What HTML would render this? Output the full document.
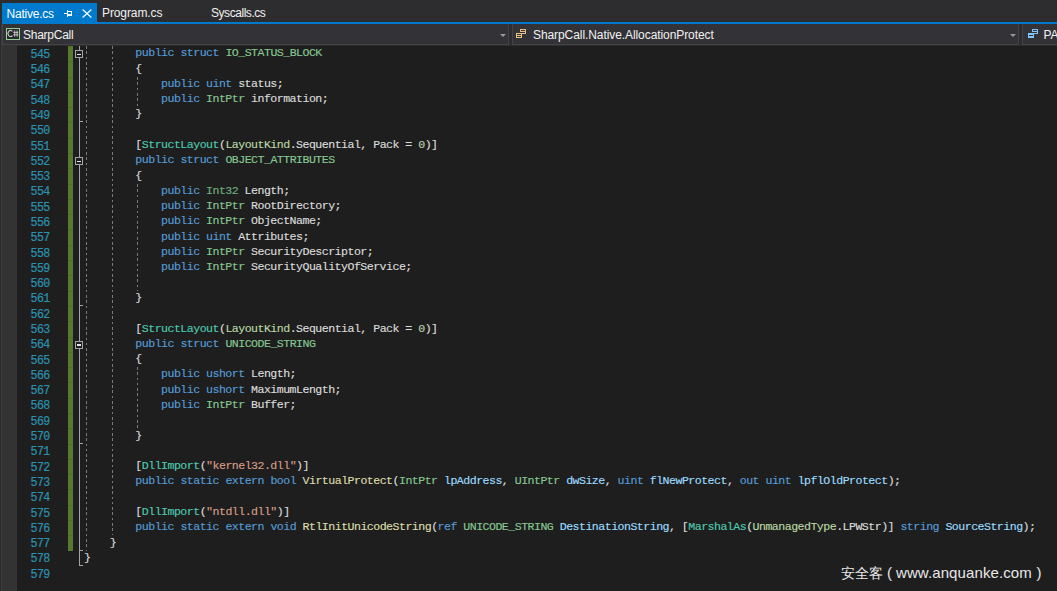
<!DOCTYPE html>
<html><head><meta charset="utf-8">
<style>
*{margin:0;padding:0;box-sizing:border-box}
html,body{width:1057px;height:591px;overflow:hidden;background:#2d2d30}
body{position:relative;font-family:"Liberation Sans",sans-serif;font-size:12px;color:#f1f1f1}
.tabbar{position:absolute;left:0;top:0;width:1057px;height:24px;background:#2d2d30}
.tab{position:absolute;top:3px;height:19px;white-space:nowrap;line-height:19px}
.tab.active{left:2px;width:95px;background:#007acc;color:#fff}
.blueline{position:absolute;left:2px;top:22px;width:1055px;height:2px;background:#007acc}
.nav{position:absolute;top:24px;left:0;width:1057px;height:22px;background:#2d2d30}
.combo{position:absolute;top:0;height:21px;background:#333337;border:1px solid #434346;border-top:none}
.arrow{position:absolute;width:0;height:0;border-left:3px solid transparent;border-right:3px solid transparent;border-top:3px solid #999}
.editor{position:absolute;left:0;top:46px;width:1057px;height:545px;background:#1e1e1e}
.margin{position:absolute;left:2px;top:45px;width:15px;height:546px;background:#333333}
.leftedge{position:absolute;left:0;top:24px;width:2px;height:567px;background:#2a2a2c;border-right:1px solid #3c3c40}
.ln{position:absolute;left:18px;width:31.8px;text-align:right;font-family:"Liberation Mono",monospace;font-size:11.6px;letter-spacing:-0.53px;-webkit-text-stroke:0.2px;color:#2b91af;line-height:15.29px;height:15.29px;transform:scaleY(1.05);transform-origin:0 70%}
.cl{position:absolute;white-space:pre;font-family:"Liberation Mono",monospace;font-size:11.6px;letter-spacing:-0.53px;-webkit-text-stroke:0.15px;color:#dcdcdc;line-height:15.29px;height:15.29px;transform:scaleY(1.0);transform-origin:0 70%}
.i{color:#6fae80} .k{color:#569cd6} .c{color:#4ec9b0} .s{color:#86c691} .e{color:#b8d7a3} .n{color:#b5cea8} .q{color:#d69d85} .m{color:#dcdcaa} .a{color:#9cdcfe}
.green{position:absolute;left:68px;top:46px;width:5px;height:504.57px;background:repeating-linear-gradient(#4f6e2b 0,#4f6e2b 1px,#587a30 1px,#587a30 15.29px)}
.ov{position:absolute;left:79px;width:1px;background:#a5a5a5}
.ot{position:absolute;left:79px;width:4px;height:1px;background:#a5a5a5}
.ob{position:absolute;left:75px;width:8px;height:8px;border:1px solid #a5a5a5;background:#1e1e1e}
.om{position:absolute;left:1px;top:2.5px;width:4px;height:1.5px;background:#e8e8e8}
.ig{position:absolute;width:1px;background:repeating-linear-gradient(#7a7a7a 0,#7a7a7a 2.6px,transparent 2.6px,transparent 5.3px)}
.wm{position:absolute;top:564px;font-size:15px;line-height:17px;color:#e8e8e8;white-space:nowrap}
</style></head><body>
<div class="tabbar">
  <div class="tab active"><span style="position:absolute;left:4.5px;top:2px;letter-spacing:-0.22px">Native.cs</span>
    <svg style="position:absolute;left:61px;top:6px" width="10" height="9" viewBox="0 0 10 9" shape-rendering="crispEdges"><g fill="#f4f8fc"><rect x="1" y="4" width="3" height="1"/><rect x="4" y="1" width="1" height="7"/><rect x="5" y="2" width="4" height="1"/><rect x="8" y="2" width="1" height="5"/><rect x="5" y="5" width="4" height="2"/></g></svg>
    <svg style="position:absolute;left:80px;top:6px" width="10" height="9" viewBox="0 0 10 9"><path d="M0.6 0.6L9.4 8.4M9.4 0.6L0.6 8.4" stroke="#f4f8fc" stroke-width="1.3"/></svg>
  </div>
  <div class="tab" style="left:102px;top:4px;letter-spacing:-0.1px">Program.cs</div>
  <div class="tab" style="left:211px;top:4px;letter-spacing:-0.45px">Syscalls.cs</div>
</div>
<div class="blueline"></div>
<div class="nav">
  <div class="combo" style="left:2px;width:507px">
    <svg style="position:absolute;left:3px;top:4px" width="14" height="12" viewBox="0 0 14 12"><rect x="0.5" y="0.5" width="13" height="11" fill="#28282b" stroke="#8fd18f"/><path d="M6.4 3.4A2.5 3.1 0 1 0 6.4 7.6" stroke="#d0d0d0" stroke-width="1.05" fill="none"/><path d="M8.7 2.4V8.7M11.1 2.4V8.7M7.3 4.4H12.4M7.3 6.8H12.4" stroke="#d0d0d0" stroke-width="0.9" fill="none"/></svg>
    <span style="position:absolute;left:20px;top:3px;line-height:17px;letter-spacing:-0.25px">SharpCall</span>
    <div class="arrow" style="left:497px;top:10px"></div>
  </div>
  <div class="combo" style="left:512px;width:507px">
    <svg style="position:absolute;left:2px;top:4px" width="12" height="11" viewBox="0 0 12 11" shape-rendering="crispEdges"><g fill="#ecc085"><rect x="5" y="1" width="6" height="1"/><rect x="5" y="3" width="6" height="1"/><rect x="5" y="5" width="6" height="1"/><rect x="10" y="1" width="1" height="5"/><rect x="5" y="1" width="1" height="3"/></g><rect x="1" y="5" width="6" height="5" fill="#333337"/><g fill="#ecc085"><rect x="1" y="5" width="6" height="1"/><rect x="1" y="7" width="6" height="1"/><rect x="1" y="9" width="6" height="1"/><rect x="1" y="5" width="1" height="5"/><rect x="6" y="5" width="1" height="5"/></g></svg>
    <span style="position:absolute;left:20px;top:3px;line-height:17px;letter-spacing:-0.08px">SharpCall.Native.AllocationProtect</span>
    <div class="arrow" style="left:497px;top:10px"></div>
  </div>
  <div class="combo" style="left:1022px;width:60px">
    <svg style="position:absolute;left:4px;top:4px" width="12" height="11" viewBox="0 0 12 11" shape-rendering="crispEdges"><g fill="#80c6ff"><rect x="5" y="1" width="6" height="1"/><rect x="5" y="3" width="6" height="1"/><rect x="5" y="5" width="6" height="1"/><rect x="10" y="1" width="1" height="5"/><rect x="5" y="1" width="1" height="3"/></g><rect x="1" y="5" width="6" height="5" fill="#80c6ff"/><rect x="2" y="7" width="4" height="1" fill="#333337"/></svg>
    <span style="position:absolute;left:20.5px;top:3px;line-height:17px">PA</span>
  </div>
</div>
<div class="editor"></div>
<div class="margin"></div>
<div class="leftedge"></div>
<div class="green"></div>
<div class="ov" style="top:46px;height:519.86px"></div>
<div class="ot" style="top:121.45px"></div>
<div class="ot" style="top:304.93px"></div>
<div class="ot" style="top:442.54px"></div>
<div class="ot" style="top:549.57px"></div>
<div class="ot" style="top:564.86px"></div>
<div class="ob" style="top:50.04px"><div class="om"></div></div>
<div class="ob" style="top:157.08px"><div class="om"></div></div>
<div class="ob" style="top:340.55px"><div class="om"></div></div>
<div class="ig" style="left:86px;top:46.00px;height:504.57px"></div>
<div class="ig" style="left:112px;top:46.00px;height:489.28px"></div>
<div class="ig" style="left:137px;top:76.58px;height:30.58px"></div>
<div class="ig" style="left:137px;top:183.61px;height:107.03px"></div>
<div class="ig" style="left:137px;top:367.09px;height:61.16px"></div>
<div class="ln" style="top:46.80px">545</div>
<div class="cl" style="top:45.30px;left:135.36px"><span class="k">public</span> <span class="k">struct</span> <span class="s">IO_STATUS_BLOCK</span></div>
<div class="ln" style="top:62.09px">546</div>
<div class="cl" style="top:60.59px;left:135.36px">{</div>
<div class="ln" style="top:77.38px">547</div>
<div class="cl" style="top:75.88px;left:161.04px"><span class="k">public</span> <span class="k">uint</span> status;</div>
<div class="ln" style="top:92.67px">548</div>
<div class="cl" style="top:91.17px;left:161.04px"><span class="k">public</span> <span class="s">IntPtr</span> information;</div>
<div class="ln" style="top:107.96px">549</div>
<div class="cl" style="top:106.46px;left:135.36px">}</div>
<div class="ln" style="top:123.25px">550</div>
<div class="ln" style="top:138.54px">551</div>
<div class="cl" style="top:137.04px;left:135.36px">[<span class="c">StructLayout</span>(<span class="e">LayoutKind</span>.Sequential, Pack = <span class="n">0</span>)]</div>
<div class="ln" style="top:153.83px">552</div>
<div class="cl" style="top:152.33px;left:135.36px"><span class="k">public</span> <span class="k">struct</span> <span class="s">OBJECT_ATTRIBUTES</span></div>
<div class="ln" style="top:169.12px">553</div>
<div class="cl" style="top:167.62px;left:135.36px">{</div>
<div class="ln" style="top:184.41px">554</div>
<div class="cl" style="top:182.91px;left:161.04px"><span class="k">public</span> <span class="i">Int32</span> Length;</div>
<div class="ln" style="top:199.70px">555</div>
<div class="cl" style="top:198.20px;left:161.04px"><span class="k">public</span> <span class="s">IntPtr</span> RootDirectory;</div>
<div class="ln" style="top:214.99px">556</div>
<div class="cl" style="top:213.49px;left:161.04px"><span class="k">public</span> <span class="s">IntPtr</span> ObjectName;</div>
<div class="ln" style="top:230.28px">557</div>
<div class="cl" style="top:228.78px;left:161.04px"><span class="k">public</span> <span class="k">uint</span> Attributes;</div>
<div class="ln" style="top:245.57px">558</div>
<div class="cl" style="top:244.07px;left:161.04px"><span class="k">public</span> <span class="s">IntPtr</span> SecurityDescriptor;</div>
<div class="ln" style="top:260.86px">559</div>
<div class="cl" style="top:259.36px;left:161.04px"><span class="k">public</span> <span class="s">IntPtr</span> SecurityQualityOfService;</div>
<div class="ln" style="top:276.15px">560</div>
<div class="ln" style="top:291.44px">561</div>
<div class="cl" style="top:289.94px;left:135.36px">}</div>
<div class="ln" style="top:306.73px">562</div>
<div class="ln" style="top:322.02px">563</div>
<div class="cl" style="top:320.52px;left:135.36px">[<span class="c">StructLayout</span>(<span class="e">LayoutKind</span>.Sequential, Pack = <span class="n">0</span>)]</div>
<div class="ln" style="top:337.31px">564</div>
<div class="cl" style="top:335.81px;left:135.36px"><span class="k">public</span> <span class="k">struct</span> <span class="s">UNICODE_STRING</span></div>
<div class="ln" style="top:352.60px">565</div>
<div class="cl" style="top:351.10px;left:135.36px">{</div>
<div class="ln" style="top:367.89px">566</div>
<div class="cl" style="top:366.39px;left:161.04px"><span class="k">public</span> <span class="k">ushort</span> Length;</div>
<div class="ln" style="top:383.18px">567</div>
<div class="cl" style="top:381.68px;left:161.04px"><span class="k">public</span> <span class="k">ushort</span> MaximumLength;</div>
<div class="ln" style="top:398.47px">568</div>
<div class="cl" style="top:396.97px;left:161.04px"><span class="k">public</span> <span class="s">IntPtr</span> Buffer;</div>
<div class="ln" style="top:413.76px">569</div>
<div class="ln" style="top:429.05px">570</div>
<div class="cl" style="top:427.55px;left:135.36px">}</div>
<div class="ln" style="top:444.34px">571</div>
<div class="ln" style="top:459.63px">572</div>
<div class="cl" style="top:458.13px;left:135.36px">[<span class="c">DllImport</span>(<span class="q">&quot;kernel32.dll&quot;</span>)]</div>
<div class="ln" style="top:474.92px">573</div>
<div class="cl" style="top:473.42px;left:135.36px"><span class="k">public</span> <span class="k">static</span> <span class="k">extern</span> <span class="k">bool</span> <span class="m">VirtualProtect</span>(<span class="s">IntPtr</span> <span class="a">lpAddress</span>, <span class="s">UIntPtr</span> <span class="a">dwSize</span>, <span class="k">uint</span> <span class="a">flNewProtect</span>, <span class="k">out</span> <span class="k">uint</span> <span class="a">lpflOldProtect</span>);</div>
<div class="ln" style="top:490.21px">574</div>
<div class="ln" style="top:505.50px">575</div>
<div class="cl" style="top:504.00px;left:135.36px">[<span class="c">DllImport</span>(<span class="q">&quot;ntdll.dll&quot;</span>)]</div>
<div class="ln" style="top:520.79px">576</div>
<div class="cl" style="top:519.29px;left:135.36px"><span class="k">public</span> <span class="k">static</span> <span class="k">extern</span> <span class="k">void</span> <span class="m">RtlInitUnicodeString</span>(<span class="k">ref</span> <span class="s">UNICODE_STRING</span> <span class="a">DestinationString</span>, [<span class="c">MarshalAs</span>(<span class="e">UnmanagedType</span>.LPWStr)] <span class="k">string</span> <span class="a">SourceString</span>);</div>
<div class="ln" style="top:536.08px">577</div>
<div class="cl" style="top:534.58px;left:109.68px">}</div>
<div class="ln" style="top:551.37px">578</div>
<div class="cl" style="top:549.87px;left:84.00px">}</div>
<div class="ln" style="top:566.66px">579</div>
<div class="wm" style="left:841px;font-size:14.2px;top:565px">安全客</div><div class="wm" style="left:887px">(</div><div class="wm" style="left:896px;letter-spacing:0.1px">www.anquanke.com</div><div class="wm" style="left:1036.5px">)</div>
</body></html>
